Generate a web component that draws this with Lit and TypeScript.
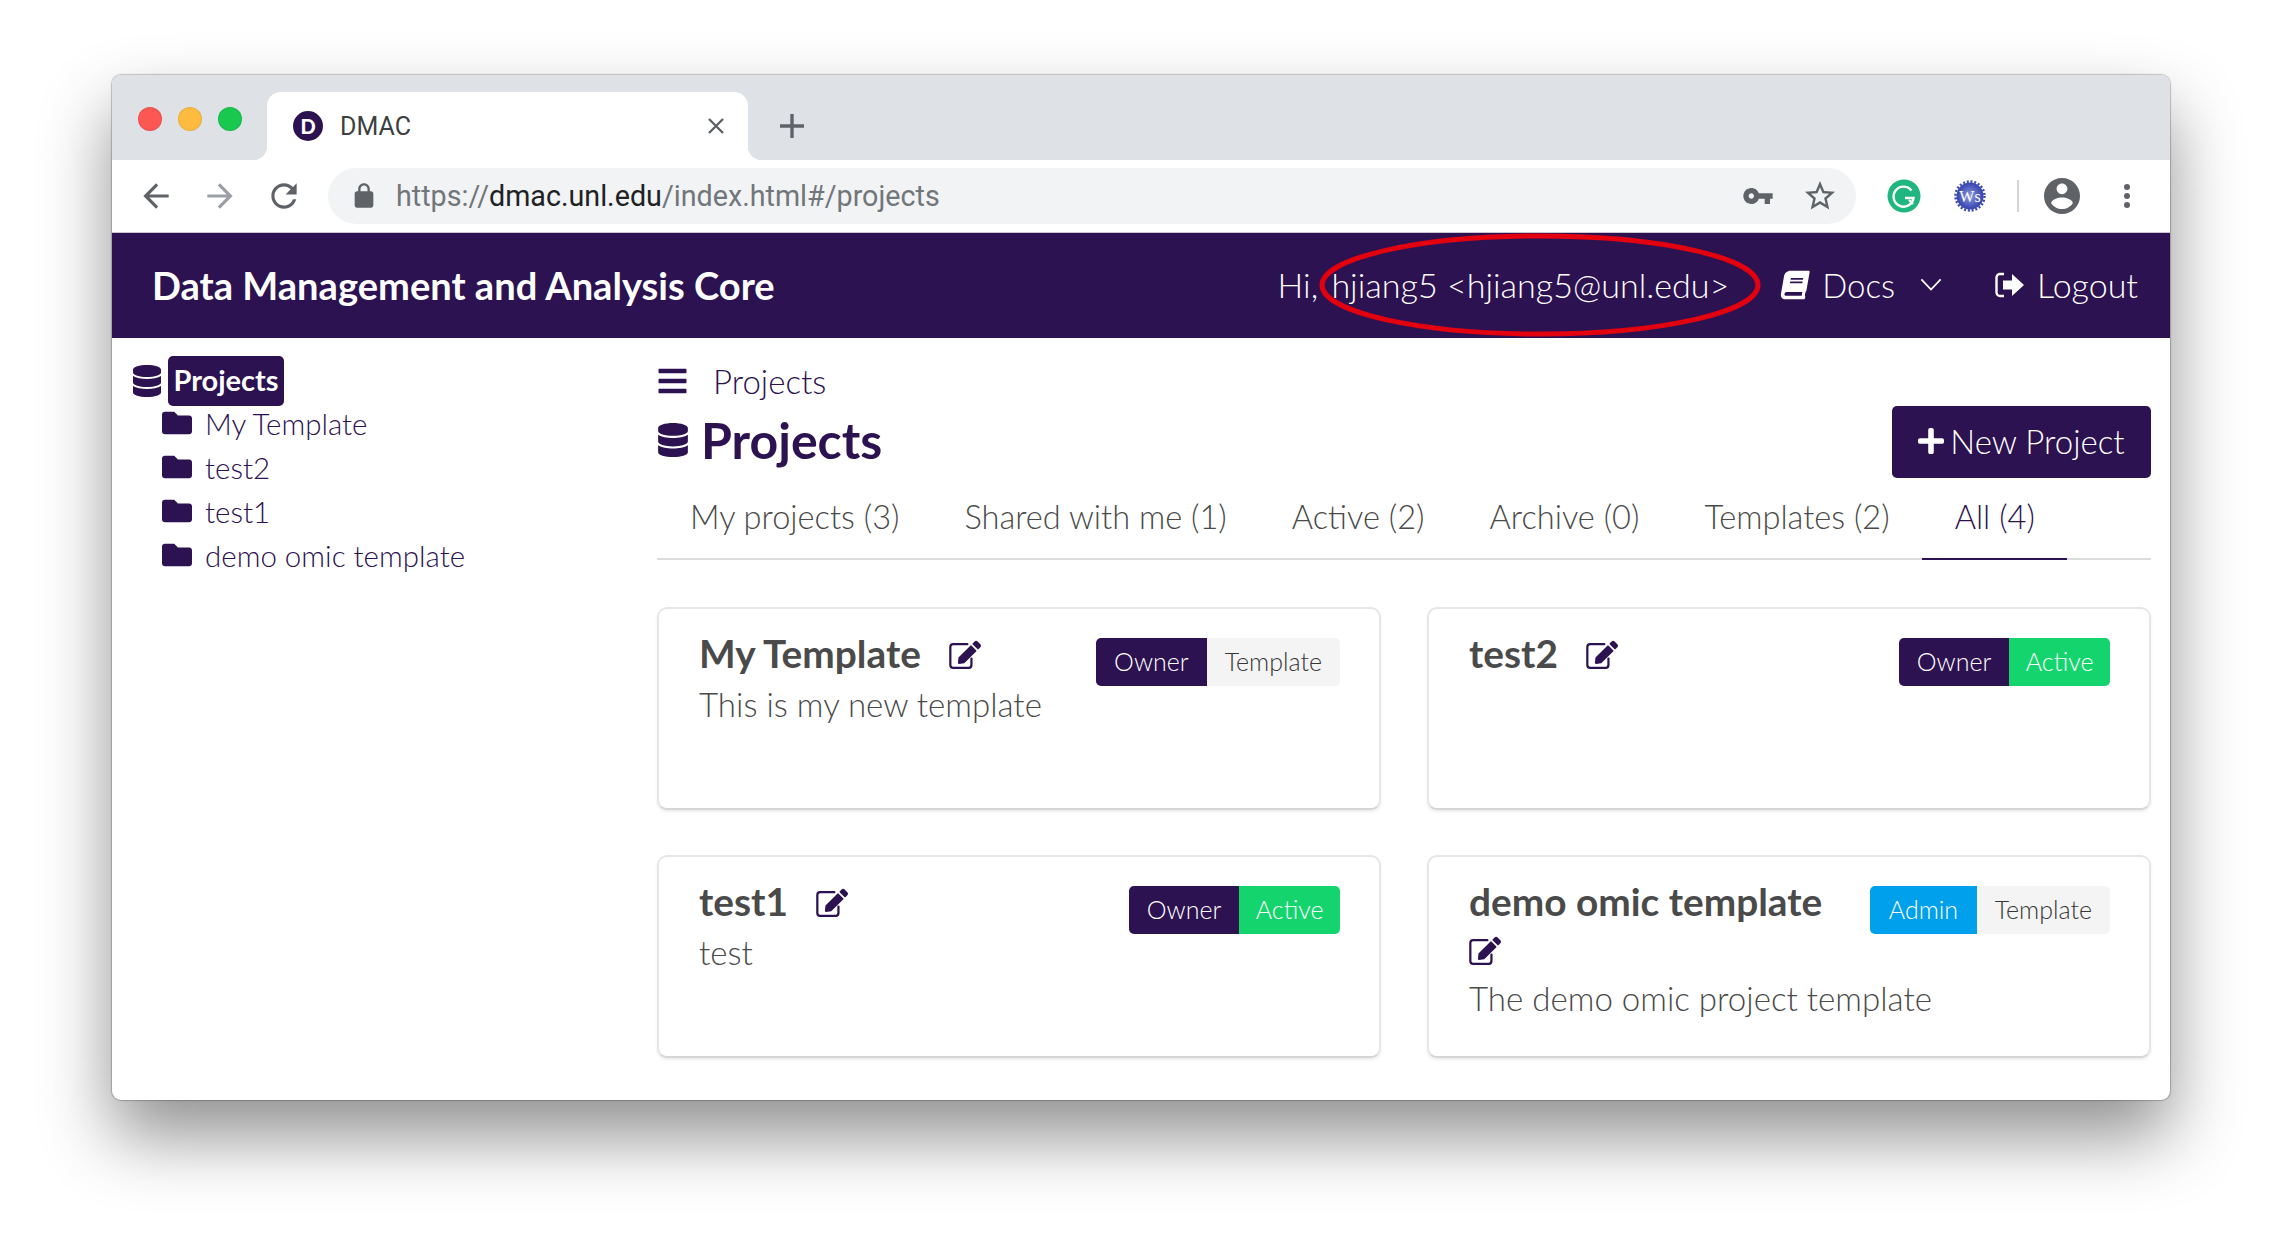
import { LitElement, html, css } from "lit";
import { customElement } from "lit/decorators.js";

const P = {
  db: "M448 73.143v45.714C448 159.143 347.667 192 224 192S0 159.143 0 118.857V73.143C0 32.857 100.333 0 224 0s224 32.857 224 73.143zM448 176v102.857C448 319.143 347.667 352 224 352S0 319.143 0 278.857V176c48.125 33.143 136.208 48.572 224 48.572S399.874 209.143 448 176zm0 160v102.857C448 479.143 347.667 512 224 512S0 479.143 0 438.857V336c48.125 33.143 136.208 48.572 224 48.572S399.874 369.143 448 336z",
  folder: "M464 128H272l-64-64H48C21.49 64 0 85.49 0 112v288c0 26.51 21.49 48 48 48h416c26.51 0 48-21.49 48-48V176c0-26.51-21.49-48-48-48z",
  bars: "M16 132h416c8.837 0 16-7.163 16-16V76c0-8.837-7.163-16-16-16H16C7.163 60 0 67.163 0 76v40c0 8.837 7.163 16 16 16zm0 160h416c8.837 0 16-7.163 16-16v-40c0-8.837-7.163-16-16-16H16c-8.837 0-16 7.163-16 16v40c0 8.837 7.163 16 16 16zm0 160h416c8.837 0 16-7.163 16-16v-40c0-8.837-7.163-16-16-16H16c-8.837 0-16 7.163-16 16v40c0 8.837 7.163 16 16 16z",
  plus: "M416 208H272V64c0-17.67-14.33-32-32-32h-32c-17.67 0-32 14.33-32 32v144H32c-17.67 0-32 14.33-32 32v32c0 17.67 14.33 32 32 32h144v144c0 17.67 14.33 32 32 32h32c17.67 0 32-14.33 32-32V304h144c17.67 0 32-14.33 32-32v-32c0-17.67-14.33-32-32-32z",
  pencil: "M402.6 83.2l90.2 90.2c3.8 3.8 3.8 10 0 13.8L274.4 405.6l-92.8 10.3c-12.4 1.4-22.9-9.1-21.5-21.5l10.3-92.8L388.8 83.2c3.8-3.8 10-3.8 13.8 0zm162-22.9l-48.8-48.8c-15.2-15.2-39.9-15.2-55.2 0l-35.4 35.4c-3.8 3.8-3.8 10 0 13.8l90.2 90.2c3.8 3.8 10 3.8 13.8 0l35.4-35.4c15.2-15.3 15.2-40 0-55.2z",
  book: "M448 360V24c0-13.3-10.7-24-24-24H96C43 0 0 43 0 96v320c0 53 43 96 96 96h328c13.3 0 24-10.7 24-24v-16c0-7.5-3.5-14.3-8.9-18.7-4.2-15.4-4.2-59.3 0-74.7 5.4-4.3 8.9-11.1 8.9-18.6zM128 134c0-3.3 2.7-6 6-6h212c3.3 0 6 2.7 6 6v20c0 3.3-2.7 6-6 6H134c-3.3 0-6-2.7-6-6v-20zm0 64c0-3.3 2.7-6 6-6h212c3.3 0 6 2.7 6 6v20c0 3.3-2.7 6-6 6H134c-3.3 0-6-2.7-6-6v-20zm253.4 250H96c-17.7 0-32-14.3-32-32 0-17.6 14.4-32 32-32h285.4c-1.9 17.1-1.9 46.9 0 64z",
  back: "M20 11H7.83l5.59-5.59L12 4l-8 8 8 8 1.41-1.41L7.83 13H20v-2z",
  fwd: "M12 4l-1.41 1.41L16.17 11H4v2h12.17l-5.58 5.59L12 20l8-8z",
  reload: "M17.65 6.35C16.2 4.9 14.21 4 12 4c-4.42 0-7.99 3.58-7.99 8s3.57 8 7.99 8c3.73 0 6.84-2.55 7.73-6h-2.08c-.82 2.33-3.04 4-5.65 4-3.31 0-6-2.69-6-6s2.69-6 6-6c1.66 0 3.14.69 4.22 1.78L13 11h7V4l-2.35 2.35z",
  key: "M12.65 10C11.83 7.67 9.61 6 7 6c-3.31 0-6 2.69-6 6s2.69 6 6 6c2.61 0 4.83-1.67 5.65-4H17v4h4v-4h2v-4H12.65zM7 14c-1.1 0-2-.9-2-2s.9-2 2-2 2 .9 2 2-.9 2-2 2z",
  star: "M22 9.24l-7.19-.62L12 2 9.19 8.63 2 9.24l5.46 4.73L5.82 21 12 17.27 18.18 21l-1.63-7.03L22 9.24zM12 15.4l-3.76 2.27 1-4.28-3.32-2.88 4.38-.38L12 6.1l1.71 4.04 4.38.38-3.32 2.88 1 4.28L12 15.4z",
  account: "M12 2C6.48 2 2 6.48 2 12s4.48 10 10 10 10-4.48 10-10S17.52 2 12 2zm0 3c1.66 0 3 1.34 3 3s-1.34 3-3 3-3-1.34-3-3 1.34-3 3-3zm0 14.2c-2.5 0-4.71-1.28-6-3.22.03-1.99 4-3.08 6-3.08 1.99 0 5.97 1.09 6 3.08-1.29 1.94-3.5 3.22-6 3.22z",
  lock: "M18 8h-1V6c0-2.76-2.24-5-5-5S7 3.24 7 6v2H6c-1.1 0-2 .9-2 2v10c0 1.1.9 2 2 2h12c1.1 0 2-.9 2-2V10c0-1.1-.9-2-2-2zM9 6c0-1.66 1.34-3 3-3s3 1.34 3 3v2H9V6z",
};

const icon = (d: string, vb: string, cls: string) =>
  html`<svg class=${cls} viewBox=${vb} fill="currentColor" aria-hidden="true"><path d=${d}></path></svg>`;

const editIcon = () => html`<svg class="editic" viewBox="0 0 576 512" aria-hidden="true">
  <path d="M24 112a50 50 0 0 1 50-50H330M24 112V438a50 50 0 0 0 50 50H354a50 50 0 0 0 50-50V320" fill="none" stroke="currentColor" stroke-width="40" stroke-linecap="round"></path>
  <path d=${P.pencil} fill="currentColor"></path>
</svg>`;

const CARDS = [
  { title: "My Template", desc: "This is my new template", role: "Owner", state: "Template" },
  { title: "test2", desc: "", role: "Owner", state: "Active" },
  { title: "test1", desc: "test", role: "Owner", state: "Active" },
  { title: "demo omic template", desc: "The demo omic project template", role: "Admin", state: "Template" },
];
const TABS = ["My projects (3)", "Shared with me (1)", "Active (2)", "Archive (0)", "Templates (2)", "All (4)"];
const TREE = ["My Template", "test2", "test1", "demo omic template"];

@customElement("app-root")
export class AppRoot extends LitElement {
  static styles = css`
    :host { display: block; width: 2282px; height: 1248px; background: #fff; overflow: hidden; font-family: Lato, "Liberation Sans", sans-serif; color: #4a4a4a; }
    .stage { box-sizing: border-box; height: 1248px; padding: 75px 112px 148px 112px; }
    .window { position: relative; height: 1025px; display: flex; flex-direction: column; background: #fff; border-radius: 9px;
      box-shadow: 0 0 1px 1px rgba(0,0,0,.22), 0 36px 70px rgba(0,0,0,.44); }
    .tabbar { height: 85px; flex: none; display: flex; align-items: flex-start; background: #dee1e6; border-radius: 9px 9px 0 0; }
    .lights { display: flex; gap: 16px; padding: 32px 0 0 26px; width: 155px; box-sizing: border-box; }
    .light { width: 24px; height: 24px; border-radius: 50%; box-sizing: border-box; border: 1px solid rgba(0,0,0,.08); }
    .red { background: #fc5753; } .yellow { background: #fdbc40; } .green { background: #19c84f; }
    .tab { position: relative; margin-top: 17px; width: 481px; height: 68px; background: #fff; border-radius: 14px 14px 0 0; display: flex; align-items: center; box-sizing: border-box; padding: 0 23px 0 26px; color: #3c4043; font: 25px Roboto, sans-serif; }
    .tab::before, .tab::after { content: ""; position: absolute; bottom: 0; width: 14px; height: 14px; }
    .tab::before { left: -14px; background: radial-gradient(circle at 0 0, #dee1e6 14px, #fff 14.5px); }
    .tab::after { right: -14px; background: radial-gradient(circle at 100% 0, #dee1e6 14px, #fff 14.5px); }
    .fav { width: 30px; height: 30px; border-radius: 50%; background: #2c1250; color: #fff; font: 900 20px/30px Lato, sans-serif; text-align: center; margin-right: 17px; flex: none; }
    .tabname { flex: 1; }
    .x { width: 18px; height: 18px; stroke: #5f6368; stroke-width: 2.4; fill: none; }
    .newtab { width: 26px; height: 26px; margin: 38px 0 0 31px; stroke: #5f6368; stroke-width: 3.4; fill: none; }
    .toolbar { height: 73px; flex: none; display: flex; align-items: center; box-sizing: border-box; border-bottom: 1px solid #c9c6cf; padding-left: 12px; color: #5f6368; }
    .navbtn { width: 64px; height: 38px; display: flex; justify-content: center; flex: none; }
    .navicon { width: 38px; height: 38px; }
    .faded { color: #9aa0a6; }
    .address { margin-left: 12px; width: 1528px; height: 56px; background: #f1f3f4; border-radius: 28px; display: flex; align-items: center; box-sizing: border-box; padding-left: 22px; flex: none; }
    .lock { width: 28px; height: 28px; margin-right: 18px; flex: none; }
    .url { flex: 1; font: 28.7px Roboto, sans-serif; color: #71767b; white-space: nowrap; }
    .url b { font-weight: 400; color: #202124; }
    .key { width: 32px; height: 32px; margin-right: 28px; }
    .star { width: 36px; height: 36px; margin-right: 18px; }
    .g { width: 34px; height: 34px; margin-left: 31px; flex: none; }
    .ws { width: 32px; height: 34px; margin-left: 33px; flex: none; }
    .sep { width: 2px; height: 32px; background: #d3d5d8; margin-left: 31px; flex: none; }
    .account { width: 36px; height: 36px; margin-left: 25px; flex: none; }
    .dots { width: 6px; height: 24px; margin-left: 44px; display: flex; flex-direction: column; justify-content: space-between; flex: none; }
    .dots i { width: 6px; height: 6px; border-radius: 50%; background: #5f6368; display: block; }
    .appbar { height: 105px; flex: none; box-sizing: border-box; background: #2c1250; color: #fff; display: flex; align-items: center; padding: 0 32px 2px 40px; position: relative; }
    .brand { font-size: 38.1px; font-weight: 700; flex: 1; white-space: nowrap; }
    .hi { font-size: 34.1px; font-weight: 300; white-space: nowrap; }
    .hi span { margin-left: 4px; }
    .docs, .logout { display: flex; align-items: center; font-size: 33px; font-weight: 300; }
    .docs { margin-left: 51px; }
    .bookic { width: 30px; height: 32px; margin-right: 12px; }
    .chev { width: 22px; height: 13px; margin-left: 25px; stroke: #fff; stroke-width: 2; fill: none; }
    .logout { margin-left: 53px; font-size: 34px; }
    .outic { width: 30px; height: 28px; margin-right: 12px; }
    .ellipse { position: absolute; left: 1204px; top: 0; width: 448px; height: 105px; pointer-events: none; }
    .ellipse ellipse { fill: none; stroke: #e3000f; stroke-width: 5; }
    .body { flex: 1; display: flex; min-height: 0; color: #2c1250; }
    .side { width: 545px; flex: none; box-sizing: border-box; padding: 18px 0 0 20px; }
    .rootrow { display: flex; align-items: center; height: 50px; margin-bottom: -5px; }
    .dbic { width: 30px; height: 32px; margin-right: 6px; color: #2c1250; flex: none; }
    .pill { background: #2c1250; color: #fff; border-radius: 5px; height: 50px; line-height: 48px; width: 116px; text-align: center; font-size: 29px; font-weight: 700; flex: none; }
    .tree { list-style: none; margin: 0; padding: 0 0 0 30px; }
    .tree li { display: flex; align-items: center; height: 44px; font-size: 29.5px; font-weight: 300; white-space: nowrap; }
    .folder { width: 30px; height: 30px; margin-right: 13px; flex: none; }
    .main { flex: 1; min-width: 0; padding: 19px 19px 0 0; }
    .crumb { display: flex; align-items: center; height: 48px; font-size: 33px; font-weight: 300; }
    .barsic { width: 29px; height: 32px; margin-right: 26px; margin-left: 1px; }
    .titlerow { display: flex; align-items: center; justify-content: space-between; height: 72px; margin-top: 1px; }
    h1 { margin: 0 0 5px; display: flex; align-items: center; font-size: 50px; font-weight: 700; line-height: 1; }
    .h1ic { width: 30px; height: 34px; margin: 0 13px 0 1px; }
    .newbtn { height: 72px; width: 259px; box-sizing: border-box; border: 0; border-radius: 5px; background: #2c1250; color: #fff; font: 300 33px Lato, sans-serif; display: flex; align-items: center; justify-content: center; padding: 0 0 2px; }
    .plus { width: 26px; height: 30px; margin-right: 6px; }
    .tabs { display: flex; height: 79px; margin-top: 3px; border-bottom: 2px solid #dcdcdc; box-sizing: border-box; }
    .navtab { padding: 0 32px 0 33px; height: 79px; box-sizing: border-box; line-height: 72px; font-size: 32.6px; font-weight: 300; color: #4a4a4a; white-space: nowrap; }
    .navtab.on { color: #2c1250; border-bottom: 2px solid #2c1250; }
    .grid { display: grid; grid-template-columns: 724px 724px; column-gap: 46px; row-gap: 45px; margin-top: 47px; }
    .card { height: 203px; box-sizing: border-box; border: 2px solid #e6e6e6; border-bottom-color: #d6d6d6; border-radius: 10px; box-shadow: 0 2px 3px rgba(0,0,0,.08); padding: 19px 39px 0 40px; display: flex; gap: 8px; background: #fff; }
    .cardtext { flex: 1; min-width: 0; }
    .cardtitle { display: flex; flex-wrap: wrap; align-items: center; }
    h3 { margin: 0; font-size: 38.8px; font-weight: 700; line-height: 50px; color: #4a4a4a; margin-right: 28px; white-space: nowrap; }
    .editic { width: 32px; height: 30px; color: #2c1250; }
    .cardtitle .editic { margin: 10px 0 6px; }
    .desc { margin: 1px 0 0; font-size: 33.1px; font-weight: 300; line-height: 50px; color: #4a4a4a; white-space: nowrap; }
    .tags { display: flex; height: 48px; margin-top: 10px; flex: none; border-radius: 5px; overflow: hidden; font-size: 25px; font-weight: 300; line-height: 46px; }
    .tag { padding: 0 18px; }
    .Owner { background: #2c1250; color: #fff; }
    .Admin { background: #00a0ec; color: #fff; padding: 0 18.5px; }
    .Active { background: #14d56d; color: #fff; padding: 0 16.5px; }
    .Template { background: #f4f4f4; color: #363636; }
  `;

  render() {
    return html`<div class="stage"><div class="window">
      <div class="tabbar">
        <div class="lights"><span class="light red"></span><span class="light yellow"></span><span class="light green"></span></div>
        <div class="tab">
          <span class="fav">D</span><span class="tabname">DMAC</span>
          <svg class="x" viewBox="0 0 18 18"><path d="M2 2l14 14M16 2L2 16"></path></svg>
        </div>
        <svg class="newtab" viewBox="0 0 26 26"><path d="M13 1v24M1 13h24"></path></svg>
      </div>
      <div class="toolbar">
        <span class="navbtn">${icon(P.back, "0 0 24 24", "navicon")}</span>
        <span class="navbtn faded">${icon(P.fwd, "0 0 24 24", "navicon")}</span>
        <span class="navbtn">${icon(P.reload, "0 0 24 24", "navicon")}</span>
        <div class="address">
          ${icon(P.lock, "0 0 24 24", "lock")}
          <span class="url">https://<b>dmac.unl.edu</b>/index.html#/projects</span>
          ${icon(P.key, "0 0 24 24", "key")}
          ${icon(P.star, "0 0 24 24", "star")}
        </div>
        <svg class="g" viewBox="0 0 34 34">
          <circle cx="17" cy="17" r="16.5" fill="#1fb77f"></circle>
          <path d="M24.5 11.5A10 10 0 1 0 26.5 19H18" fill="none" stroke="#fff" stroke-width="2.4"></path>
          <path d="M22 21l4 4" stroke="#fff" stroke-width="2.2"></path>
        </svg>
        <svg class="ws" viewBox="0 0 32 34">
          <defs><radialGradient id="wsg"><stop offset="0" stop-color="#8f9be0"></stop><stop offset="1" stop-color="#3443ad"></stop></radialGradient></defs>
          <circle cx="16" cy="17" r="13.5" fill="url(#wsg)"></circle>
          <circle cx="16" cy="17" r="14.5" fill="none" stroke="#3a49b4" stroke-width="2.5" stroke-dasharray="2 1.8"></circle>
          <text x="16" y="22.5" text-anchor="middle" font-family="Liberation Serif, serif" font-size="16" fill="#fff">Ws</text>
        </svg>
        <span class="sep"></span>
        ${icon(P.account, "2 2 20 20", "account")}
        <span class="dots"><i></i><i></i><i></i></span>
      </div>
      <div class="appbar">
        <div class="brand">Data Management and Analysis Core</div>
        <div class="hi">Hi,<span> hjiang5 &lt;hjiang5@unl.edu&gt;</span></div>
        <div class="docs">
          <svg class="bookic" viewBox="0 0 540 512" fill="currentColor"><g transform="translate(90 0) skewX(-10)"><path d=${P.book}></path></g></svg>
          Docs
          <svg class="chev" viewBox="0 0 24 14"><path d="M1.500 1.500L12 12.500 22.500 1.500"></path></svg>
        </div>
        <div class="logout">
          <svg class="outic" viewBox="0 0 30 28" fill="#fff"><path d="M9 3H5a3.500 3.500 0 0 0-3.500 3.500v15A3.500 3.500 0 0 0 5 25h4" fill="none" stroke="#fff" stroke-width="2.4"></path><path d="M8 9.500h9V3l12 11-12 11v-6.500H8z"></path></svg>
          Logout
        </div>
        <svg class="ellipse" viewBox="0 0 448 105"><ellipse cx="224" cy="52" rx="218" ry="49"></ellipse></svg>
      </div>
      <div class="body">
        <aside class="side">
          <div class="rootrow">${icon(P.db, "0 0 448 512", "dbic")}<span class="pill">Projects</span></div>
          <ul class="tree">
            ${TREE.map((t) => html`<li>${icon(P.folder, "0 0 512 512", "folder")}${t}</li>`)}
          </ul>
        </aside>
        <main class="main">
          <div class="crumb">${icon(P.bars, "0 0 448 512", "barsic")}Projects</div>
          <div class="titlerow">
            <h1>${icon(P.db, "0 0 448 512", "h1ic")}Projects</h1>
            <button class="newbtn">${icon(P.plus, "0 0 448 512", "plus")}New Project</button>
          </div>
          <nav class="tabs">
            ${TABS.map((t, i) => html`<span class="navtab ${i === 5 ? "on" : ""}">${t}</span>`)}
          </nav>
          <div class="grid">
            ${CARDS.map((c) => html`<article class="card">
              <div class="cardtext">
                <div class="cardtitle"><h3>${c.title}</h3>${editIcon()}</div>
                ${c.desc ? html`<p class="desc">${c.desc}</p>` : ""}
              </div>
              <div class="tags"><span class="tag ${c.role}">${c.role}</span><span class="tag ${c.state}">${c.state}</span></div>
            </article>`)}
          </div>
        </main>
      </div>
    </div></div>`;
  }
}
